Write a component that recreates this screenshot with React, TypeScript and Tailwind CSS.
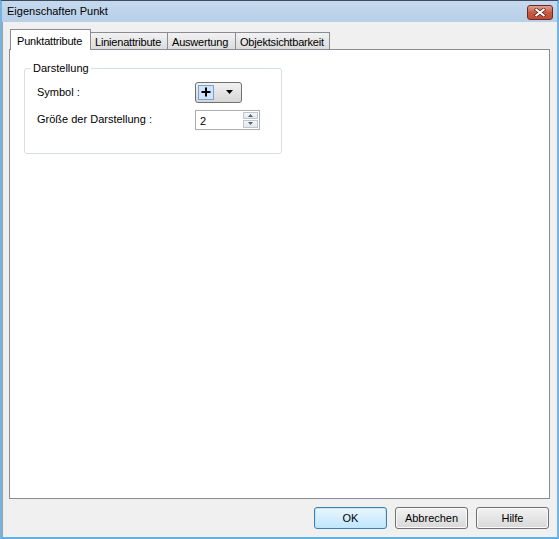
import React from "react";

const font = { fontFamily: '"Liberation Sans", Arial, sans-serif' };

const Tab: React.FC<{ label: string; active?: boolean; width: string }> = ({ label, active, width }) =>
  active ? (
    <div
      className={`${width} relative z-10 -mb-px h-[21px] border border-b-0 border-[#898c95] bg-white pl-[6px] pt-[3px] text-[11px] tracking-[-0.2px] text-black`}
    >
      {label}
    </div>
  ) : (
    <div
      className={`${width} mt-[3px] h-[17px] border border-b-0 border-l-0 border-[#898c95] bg-gradient-to-b from-[#f2f2f2] to-[#dcdcdc] pl-[4px] pt-[1px] text-[11px] tracking-[-0.2px] text-black`}
    >
      {label}
    </div>
  );

const DialogButton: React.FC<{ label: string; primary?: boolean }> = ({ label, primary }) => (
  <button
    className={`h-[22px] w-[73px] rounded-[3px] border text-[11px] text-black ${
      primary
        ? "border-[#3c7fb1] bg-gradient-to-b from-[#eaf6fd] to-[#bee6fd] shadow-[inset_0_0_0_1px_#c4e5f6]"
        : "border-[#707070] bg-gradient-to-b from-[#f2f2f2] to-[#d8d8d8] shadow-[inset_0_0_0_1px_#fafafa]"
    }`}
  >
    {label}
  </button>
);

export default function App() {
  return (
    <div
      style={font}
      className="flex h-[539px] w-[559px] flex-col overflow-hidden border-x-2 border-b-2 border-t border-x-[#76b3df] border-b-[#5fb0e3] border-t-[#3d4c5c] bg-[#b9d1ea]"
    >
      {/* title bar */}
      <div className="flex h-[21px] shrink-0 items-center justify-between bg-gradient-to-b from-[#c6d9ee] to-[#b7cfe8] pl-[5px] pr-[4px]">
        <span className="text-[11px] text-black">Eigenschaften Punkt</span>
        <div className="mt-[1px] flex h-[15px] w-[26px] items-center justify-center rounded-[3px] border border-[#6b2a2a] bg-gradient-to-b from-[#e3a08f] via-[#c85a42] to-[#c34a33]">
          <svg width="12" height="9" viewBox="0 0 12 9">
            <path d="M1 0.5 L11 8.5 M11 0.5 L1 8.5" stroke="#5a2a22" strokeWidth="3.4" />
            <path d="M1.5 1 L10.5 8 M10.5 1 L1.5 8" stroke="#ffffff" strokeWidth="2" />
          </svg>
        </div>
      </div>

      {/* client area */}
      <div className="flex flex-1 flex-col border-l border-[#a0a0a0] bg-[#f0f0f0] px-[6px] pt-[6px]">
        <div className="flex h-[21px] items-end pl-[1px]">
          <Tab label="Punktattribute" active width="w-[81px]" />
          <Tab label="Linienattribute" width="w-[77px]" />
          <Tab label="Auswertung" width="w-[68px]" />
          <Tab label="Objektsichtbarkeit" width="w-[94px]" />
        </div>
        <div className="h-[450px] w-[541px] border border-[#898c95] bg-white px-[14px] pt-[18px]">
          <div className="relative h-[86px] w-[258px] rounded-[3px] border border-[#d5dfe5]">
            <span className="absolute -top-[7px] left-[6px] bg-white px-[2px] text-[11px] leading-[13px] text-black">
              Darstellung
            </span>
            <div className="flex flex-col pl-[12px] pt-[12px]">
              <div className="flex h-[22px] items-center">
                <span className="w-[158px] text-[11px] text-black">Symbol :</span>
                <div className="flex h-[21px] w-[47px] items-center rounded-[3px] border border-[#707070] bg-gradient-to-b from-[#f2f2f2] to-[#d6d6d6] pl-[2px]">
                  <div className="flex h-[15px] w-[16px] items-center justify-center border border-[#7da2ce] bg-[#cfe4fa]">
                    <svg width="10" height="10" viewBox="0 0 10 10">
                      <path d="M5 0.5 V9.5 M0.5 5 H9.5" stroke="#000" strokeWidth="2" />
                    </svg>
                  </div>
                  <svg className="ml-[12px]" width="7" height="4" viewBox="0 0 7 4">
                    <path d="M0 0 H7 L3.5 4 Z" fill="#000" />
                  </svg>
                </div>
              </div>
              <div className="mt-[6px] flex h-[21px] items-center">
                <span className="w-[158px] text-[11px] text-black">Größe der Darstellung :</span>
                <div className="flex h-[20px] w-[65px] items-stretch border border-[#abadb3] bg-white">
                  <span className="flex-1 pl-[4px] pt-[2px] text-[11px] text-black">2</span>
                  <div className="m-[1px] flex w-[15px] flex-col gap-px">
                    <div className="flex flex-1 items-center justify-center border border-[#c0c6cf] bg-gradient-to-b from-[#f6f6f6] to-[#e2e6ec]">
                      <svg width="5" height="3" viewBox="0 0 5 3">
                        <path d="M0 3 L2.5 0 L5 3 Z" fill="#4d6185" />
                      </svg>
                    </div>
                    <div className="flex flex-1 items-center justify-center border border-[#c0c6cf] bg-gradient-to-b from-[#f6f6f6] to-[#e2e6ec]">
                      <svg width="5" height="3" viewBox="0 0 5 3">
                        <path d="M0 0 L5 0 L2.5 3 Z" fill="#4d6185" />
                      </svg>
                    </div>
                  </div>
                </div>
              </div>
            </div>
          </div>
        </div>
        <div className="flex justify-end gap-[8px] pr-[2px] pt-[8px]">
          <DialogButton label="OK" primary />
          <DialogButton label="Abbrechen" />
          <DialogButton label="Hilfe" />
        </div>
      </div>
    </div>
  );
}
